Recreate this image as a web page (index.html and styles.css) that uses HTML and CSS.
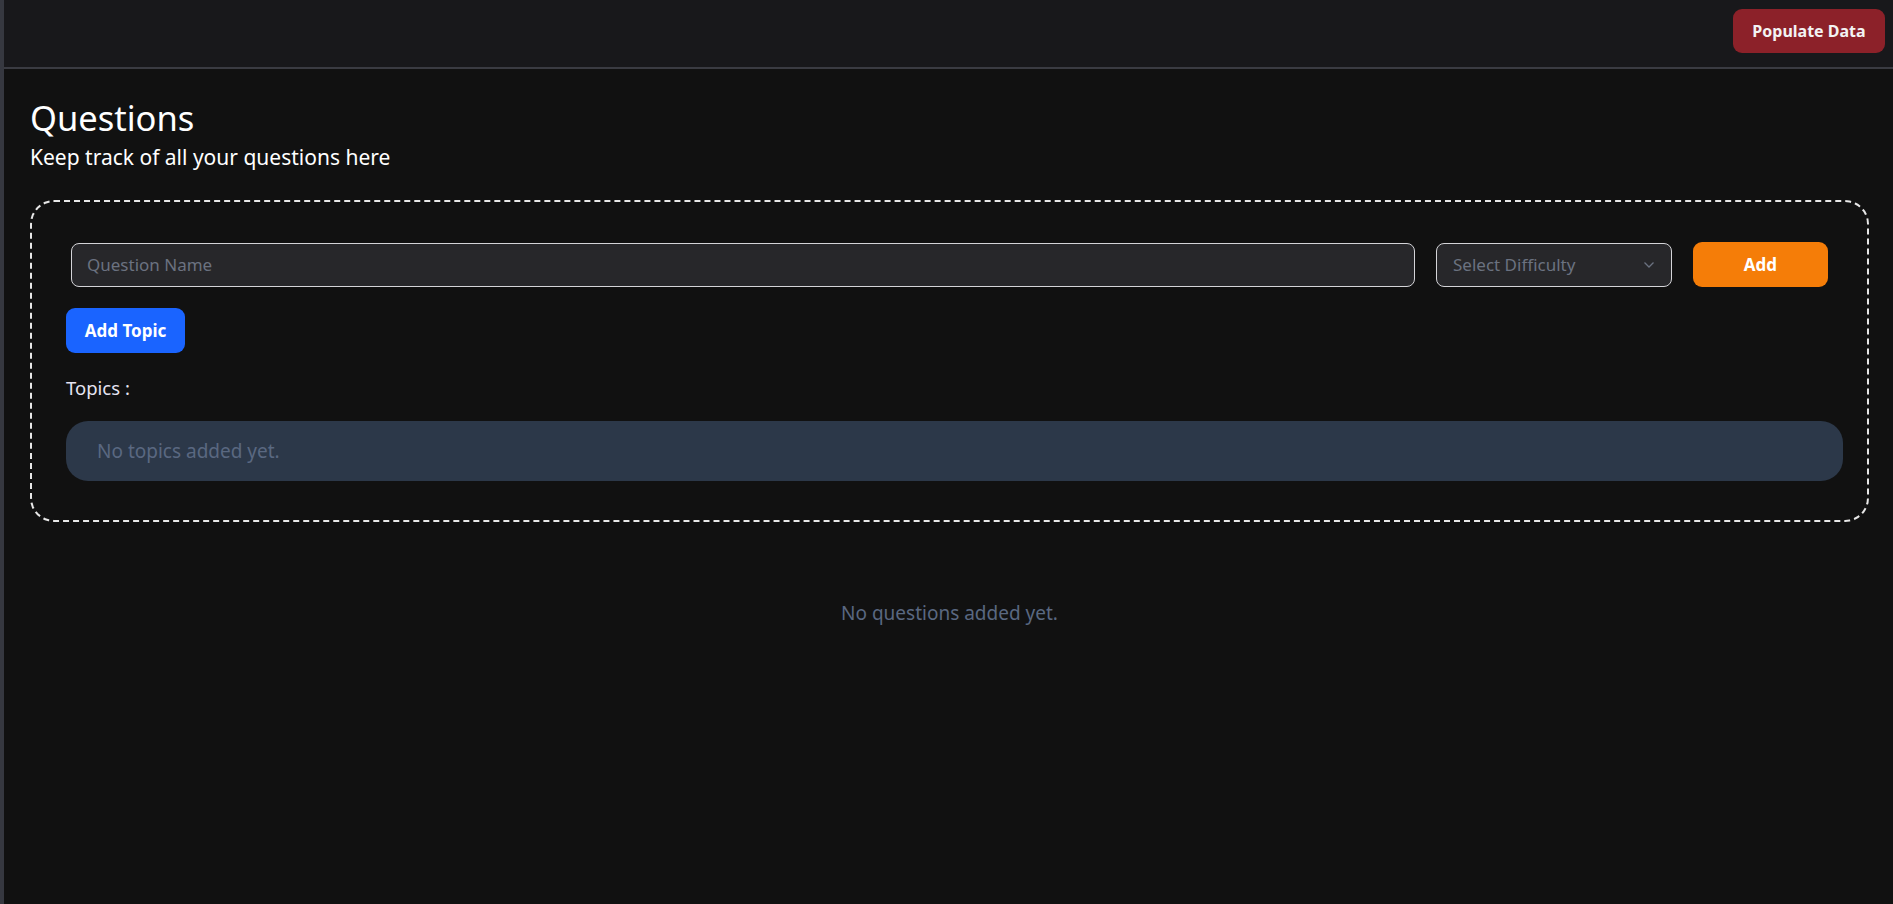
FILE: index.html
```html
<!DOCTYPE html>
<html lang="en">
<head>
    <meta charset="UTF-8">
    <meta name="viewport" content="width=device-width, initial-scale=1.0">
    <title>Questions</title>
    <link rel="stylesheet" href="styles.css">
</head>
<body>
    <div class="app">
        <aside class="rail"></aside>
        <div class="main">
            <header class="topbar">
                <button class="populate">Populate Data</button>
            </header>

            <section class="page">
                <h1 class="title">Questions</h1>
                <p class="subtitle">Keep track of all your questions here</p>

                <div class="composer">
                    <div class="row">
                        <input class="question-input" type="text" placeholder="Question Name">
                        <div class="select">
                            <span>Select Difficulty</span>
                            <svg width="12" height="8" viewBox="0 0 12 8" fill="none">
                                <path d="M1.5 1.5 L6 6 L10.5 1.5" stroke="#6b7280" stroke-width="1.3"/>
                            </svg>
                        </div>
                        <button class="add">Add</button>
                    </div>

                    <button class="add-topic">Add Topic</button>

                    <p class="topics-label">Topics :</p>
                    <div class="topics-empty">No topics added yet.</div>
                </div>

                <p class="empty">No questions added yet.</p>
            </section>
        </div>
    </div>
</body>
</html>
```

FILE: styles.css
```css
body{
    margin:0px;
    background-color:#111111;
    font-family:'Noto Sans', 'Open Sans', sans-serif;
    color:#f4f4f5;
}
.app{
    display:flex;
    min-height:904px;
}
.rail{
    width:4px;
    background-color:#363840;
    flex-shrink:0;
}
.main{
    flex:1;
}
.topbar{
    height:69px;
    box-sizing:border-box;
    background-color:#18181b;
    border-bottom:2px solid #3a3b42;
    display:flex;
    justify-content:flex-end;
    align-items:flex-start;
    padding:9px 8px 0 0;
}
.populate{
    width:152px;
    height:44px;
    background-color:#8c2129;
    color:#f3f3f3;
    border:none;
    border-radius:9px;
    font-family:inherit;
    font-size:16px;
    font-weight:bold;
    cursor:pointer;
}
.page{
    padding:27px 24px 0 26px;
}
.title{
    margin:0;
    font-size:34.5px;
    font-weight:normal;
    line-height:44px;
    color:#ffffff;
}
.subtitle{
    margin:3px 0 0 0;
    font-size:21px;
    line-height:28px;
    color:#ffffff;
}
.composer{
    margin-top:29px;
    border:2px dashed #e8e8e8;
    border-radius:24px;
    padding:40px 24px 39px 34px;
}
.row{
    display:flex;
    align-items:center;
    gap:21px;
    padding:0 15px 0 5px;
}
.question-input{
    flex:1;
    height:44px;
    box-sizing:border-box;
    background-color:#27272a;
    border:1px solid #d4d4d8;
    border-radius:8px;
    padding:0 15px;
    font-family:inherit;
    font-size:17px;
    color:#f4f4f5;
    outline:none;
}
.question-input::placeholder{
    color:#6b7280;
}
.select{
    width:236px;
    height:44px;
    box-sizing:border-box;
    background-color:#27272a;
    border:1px solid #d4d4d8;
    border-radius:8px;
    padding:0 16px 0 16px;
    display:flex;
    align-items:center;
    justify-content:space-between;
    font-size:17px;
    color:#6b7280;
}
.add{
    width:135px;
    height:45px;
    background-color:#f57d08;
    color:#ffffff;
    border:none;
    border-radius:9px;
    font-family:inherit;
    font-size:17px;
    font-weight:bold;
    cursor:pointer;
}
.add-topic{
    margin-top:21px;
    width:119px;
    height:45px;
    background-color:#1a64ff;
    color:#ffffff;
    border:none;
    border-radius:9px;
    font-family:inherit;
    font-size:17px;
    font-weight:bold;
    cursor:pointer;
}
.topics-label{
    margin:21px 0 0 0;
    font-size:18.5px;
    line-height:27px;
    color:#e6e4f2;
}
.topics-empty{
    margin-top:20px;
    height:60px;
    border-radius:22px;
    background-color:#2c3849;
    display:flex;
    align-items:center;
    padding-left:31px;
    font-size:19px;
    color:#5a6881;
}
.empty{
    margin:78px 0 0 0;
    text-align:center;
    font-size:19px;
    line-height:27px;
    color:#5a6881;
}
```
